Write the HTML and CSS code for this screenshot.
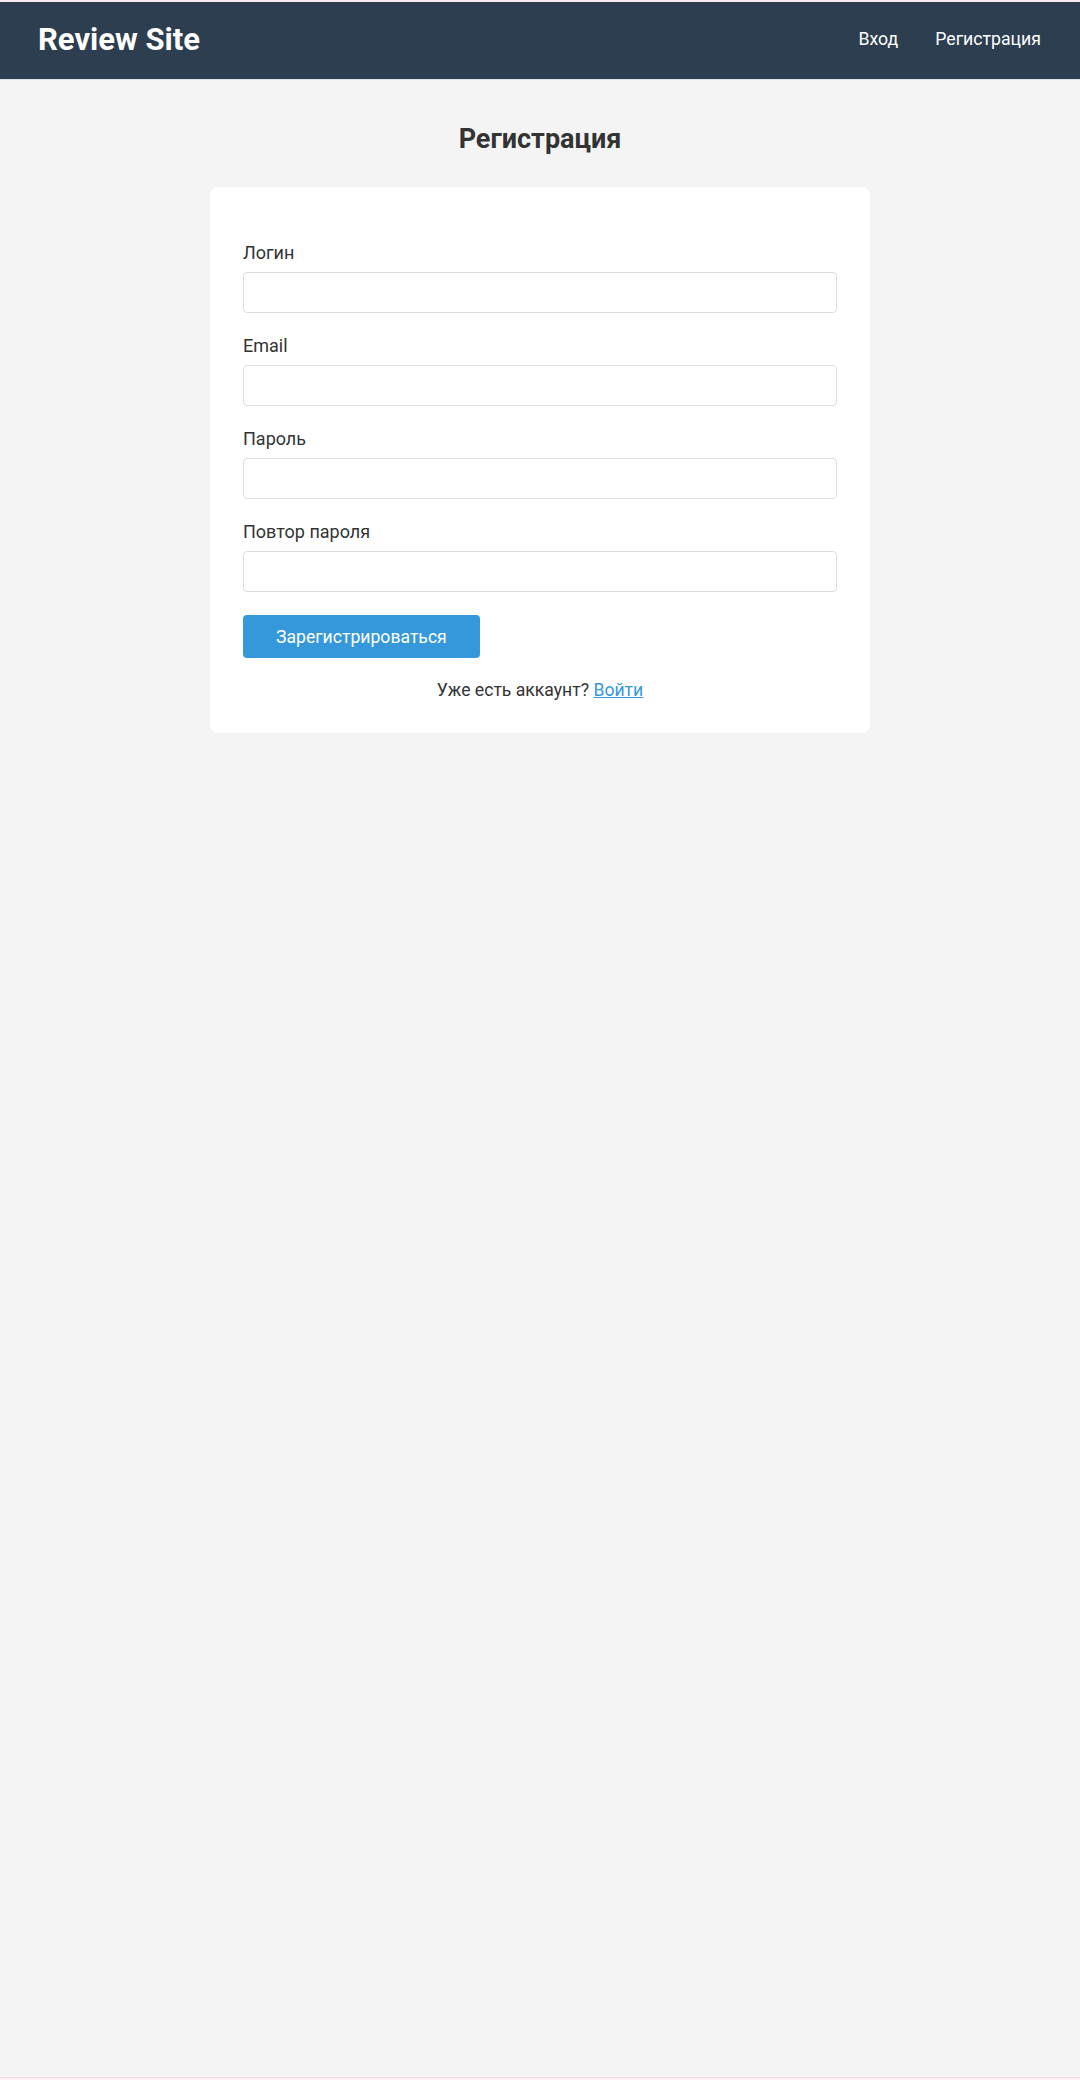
FILE: index.html
```html
<!DOCTYPE html>
<html lang="ru">
<head>
<meta charset="utf-8">
<title>Регистрация — Review Site</title>
<link rel="stylesheet" href="styles.css">
</head>
<body>
<header class="site-header">
  <a class="logo" href="#">Review Site</a>
  <nav class="nav">
    <a class="nav-link" href="#">Вход</a>
    <a class="nav-link" href="#">Регистрация</a>
  </nav>
</header>
<main class="main">
  <h1 class="page-title">Регистрация</h1>
  <form class="card">
    <div class="field">
      <label class="label">Логин</label>
      <input class="input" type="text">
    </div>
    <div class="field">
      <label class="label">Email</label>
      <input class="input" type="email">
    </div>
    <div class="field">
      <label class="label">Пароль</label>
      <input class="input" type="password">
    </div>
    <div class="field">
      <label class="label">Повтор пароля</label>
      <input class="input" type="password">
    </div>
    <button class="btn" type="button">Зарегистрироваться</button>
    <p class="alt">Уже есть аккаунт? <a class="link" href="#">Войти</a></p>
  </form>
</main>
<div class="bottom-strip"></div>
</body>
</html>
```

FILE: styles.css
```css
* { box-sizing: border-box; }
html, body { margin: 0; padding: 0; }
body {
  min-height: 100vh;
  display: flex;
  flex-direction: column;
  background: #f4f4f4;
  border-top: 2px solid #fbe8f0;
  font-family: Roboto, "Liberation Sans", sans-serif;
  color: #333;
}
.site-header {
  height: 78px;
  background: #2c3e50;
  border-bottom: 1px solid #dde4ec;
  display: flex;
  align-items: center;
  justify-content: space-between;
  padding: 0 39px 2px 38px;
}
.logo {
  color: #fff;
  text-decoration: none;
  font-size: 31px;
  font-weight: 700;
}
.nav { display: flex; gap: 37px; margin-bottom: 2px; }
.nav-link {
  color: #fff;
  text-decoration: none;
  font-size: 17.7px;
}
.main {
  flex: 1;
  display: flex;
  flex-direction: column;
  align-items: center;
}
.page-title {
  margin: 41px 0 30px;
  font-size: 27px;
  font-weight: 700;
  color: #333;
  line-height: 36px;
}
.card {
  width: 660px;
  background: #fff;
  border-radius: 8px;
  padding: 55px 33px 31px;
  display: flex;
  flex-direction: column;
}
.field { display: flex; flex-direction: column; margin-bottom: 22px; }
.label {
  font-size: 18px;
  font-weight: 400;
  color: #333;
  line-height: 22px;
  margin-bottom: 8px;
}
.input {
  height: 41px;
  border: 1px solid #ddd;
  border-radius: 4px;
  background: #fff;
  font: inherit;
}
.btn {
  align-self: flex-start;
  height: 43px;
  padding: 0 33px;
  margin-top: 1px;
  border: none;
  border-radius: 4px;
  background: #3498db;
  color: #fff;
  font-family: inherit;
  font-size: 17.6px;
}
.alt {
  margin: 20px 0 0;
  text-align: center;
  font-size: 17.6px;
  line-height: 24px;
}
.link { color: #3498db; }
.bottom-strip {
  height: 3px;
  background: #fdf1f5;
  border-top: 1px solid #f2d6e0;
}
```
